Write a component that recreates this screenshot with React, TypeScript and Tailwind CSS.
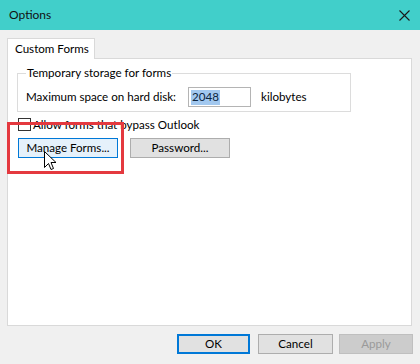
import React from "react";

export default function App() {
  const font = { fontFamily: 'Lato, "Noto Sans", sans-serif' };
  return (
    <div
      className="relative w-[420px] h-[364px] overflow-hidden bg-[#f0f0f0] text-[11.6px] text-black leading-none whitespace-nowrap"
      style={font}
    >
      {/* Title bar */}
      <div className="h-[30px] bg-[#41cfca] flex items-center justify-between pl-[9px] pr-[10px]">
        <span className="text-[12px] text-[#111]">Options</span>
        <svg width="11" height="11" viewBox="0 0 11 11">
          <path d="M0.5 0.5 L10.5 10.5 M10.5 0.5 L0.5 10.5" stroke="#1a1a1a" strokeWidth="1.1" />
        </svg>
      </div>

      <div className="pl-[7px] pt-[8px]">
        {/* Tab header */}
        <div className="flex h-[20px]">
          <div className="relative z-10 w-[88px] h-[21px] bg-white border border-b-0 border-[#d9d9d9] flex items-center pl-[7px]">
            Custom Forms
          </div>
        </div>
        {/* Panel */}
        <div className="w-[405px] h-[268px] bg-white border border-[#d9d9d9] pt-[6px]">
          <fieldset className="ml-[9px] w-[334px] h-[47px] border border-[#dcdcdc] pl-[8px] pr-0">
            <legend className="px-[1px] leading-[16px]">Temporary storage for forms</legend>
            <div className="flex items-center mt-[6px]">
              <span className="w-[162px]">Maximum space on hard disk:</span>
              <div className="w-[63px] h-[20px] border border-[#b4b4b4] bg-white flex items-center pl-[2px]">
                <span className="bg-[#a2c8ef] text-[#0d2540] h-[15px] flex items-center px-[1px]">2048</span>
              </div>
              <span className="ml-[10px]">kilobytes</span>
            </div>
          </fieldset>

          <div className="flex items-center ml-[10px] mt-[6px] h-[13px]">
            <div className="w-[13px] h-[13px] border border-[#333] bg-white" />
            <span className="ml-[2px]">Allow forms that bypass Outlook</span>
          </div>

          <div className="flex ml-[10px] mt-[7px] gap-[12px]">
            <div className="w-[100px] h-[20px] bg-[#e5f1fb] border border-[#0078d7] flex items-center justify-center">
              Manage Forms...
            </div>
            <div className="w-[100px] h-[20px] bg-[#e1e1e1] border border-[#adadad] flex items-center justify-center">
              Password...
            </div>
          </div>
        </div>

        {/* Bottom buttons */}
        <div className="flex mt-[8px] pl-[170px]">
          <div className="w-[73px] h-[20px] bg-[#e1e1e1] border-2 border-[#0078d7] flex items-center justify-center">
            OK
          </div>
          <div className="ml-[8px] w-[75px] h-[20px] bg-[#e1e1e1] border border-[#adadad] flex items-center justify-center">
            Cancel
          </div>
          <div className="ml-[6px] w-[74px] h-[20px] bg-[#cccccc] border border-[#bfbfbf] text-[#9a9a9a] flex items-center justify-center">
            Apply
          </div>
        </div>
      </div>

      {/* Red annotation box */}
      <div className="absolute left-[7px] top-[122px] w-[117px] h-[52px] border-[3px] border-[#e4393f] pointer-events-none" />

      {/* Mouse cursor */}
      <svg
        className="absolute left-[44px] top-[151px]"
        width="13"
        height="20"
        viewBox="0 0 13 20"
      >
        <path
          d="M0.5 0.5 L0.5 16.5 L4.5 12.5 L7 18.5 L9.5 17.5 L7 11.5 L12 11.5 Z"
          fill="#fff"
          stroke="#000"
          strokeWidth="1"
          strokeLinejoin="miter"
        />
      </svg>
    </div>
  );
}
